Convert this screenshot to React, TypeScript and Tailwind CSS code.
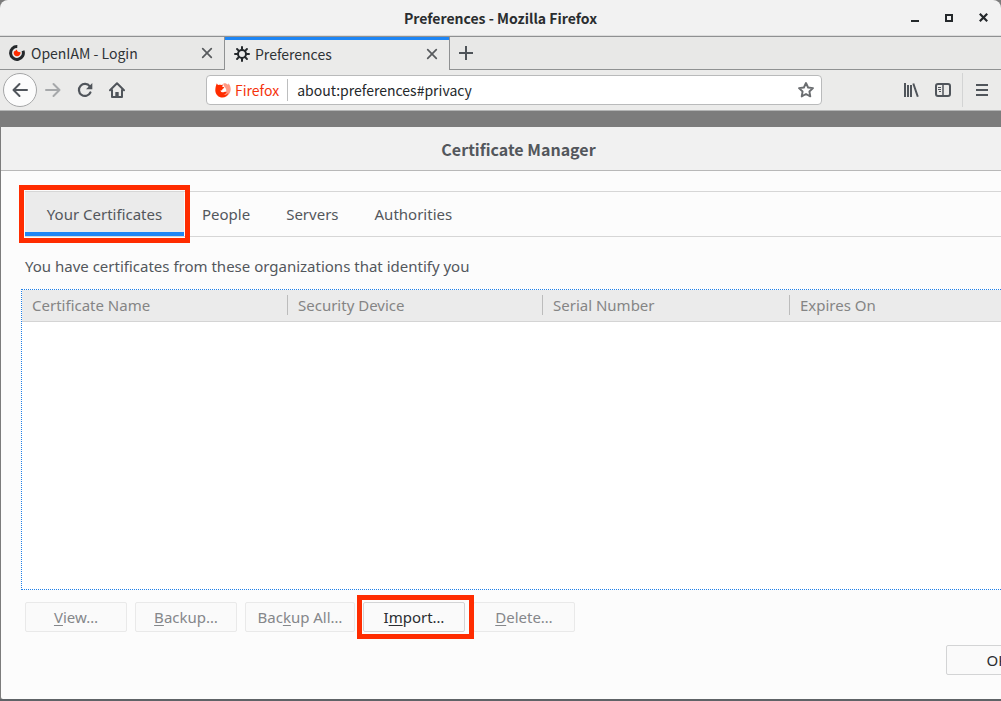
import { clsx } from 'clsx';
import type { ReactNode } from 'react';

const certTabs = ['Your Certificates', 'People', 'Servers', 'Authorities'];

const columns = [
  { label: 'Certificate Name', width: 'w-[265px]' },
  { label: 'Security Device', width: 'w-[255px]' },
  { label: 'Serial Number', width: 'w-[247px]' },
  { label: 'Expires On', width: '' },
];

function CloseIcon() {
  return (
    <svg width="12" height="12" viewBox="0 0 12 12" fill="none" stroke="#585b5e" strokeWidth="1.7" strokeLinecap="round">
      <path d="M1.7 1.7l8.600 8.600M10.300 1.700l-8.600 8.600" />
    </svg>
  )
}

function OpenIamIcon() {
  return (
    <svg width="16" height="16" viewBox="0 0 16 16" fill="none">
      <path d="M8.300 1.600A6.400 6.400 0 1 0 14 5.800" stroke="#24282b" strokeWidth="3" />
      <path d="M7.500 4.500l1.400 2.300 2.600.400c.300 2.200-1.300 4-3.500 4-2 0-3.300-1.400-3.300-3.200 0-1.200.6-2 1.800-2.300z" fill="#ff2c00" />
    </svg>
  )
}

function GearIcon() {
  return (
    <svg width="16" height="16" viewBox="0 0 16 16" fill="none" stroke="#24282b">
      <circle cx="8" cy="8" r="4" strokeWidth="2" />
      <path strokeWidth="2" strokeLinecap="round" d="M8 1v2.500M8 12.500V15M1 8h2.500M12.500 8H15M3.050 3.050l1.800 1.800M11.150 11.150l1.800 1.800M3.050 12.950l1.800-1.800M11.150 4.850l1.800-1.800" />
    </svg>
  )
}

function FirefoxIcon() {
  return (
    <svg width="16" height="16" viewBox="0 0 16 16">
      <path fill="#ff9a85" d="M8.500 1.200c2.200-.2 3.400.3 4.600 1.600l.4-1.500c1.500 1.800 2.300 4 2.200 6.400-.2 3.300-2.300 6-5.200 7L8 12.500c2.600-.8 3.600-2.500 3.200-4.700-.2-1.300-.9-2.200-1.500-2.900-.8-.9-1.500-2-1.200-3.700z" />
      <path fill="#ff2c00" d="M1.900 1.200c.3 1 .9 1.500 1.600 1.900 1-.5 1.900-.4 2.700-.1l2.200-.5c-.9.8-1.300 1.600-1.200 2.300l2.100.5c-.2.900-1 1.300-1.900 1.700l-.2 1.200-1.800.2c.5 1.700 2 2.400 3.900 1.700 1-.4 1.700-.4 2.300.2-.7 1.600-1.800 2.400-3.300 2.700 1.900.2 3.700-.5 5.200-2.300-.8 3-3.100 4.900-6 4.900C3.600 15.600.4 12.500.3 8.500c0-2.600.5-4.900 1.600-7.300z" />
    </svg>
  )
}

function Access({ text, at }: { text: string, at: number }) {
  return (
    <span>{text.slice(0, at)}<u className="underline-offset-2">{text[at]}</u>{text.slice(at + 1)}</span>
  )
}

function DialogButton({ children, disabled, wide }: {
  children: ReactNode
  disabled?: boolean
  wide?: boolean
}) {
  return (
    <button
      type="button"
      disabled={disabled}
      className={clsx(
        'h-[30px] shrink-0 rounded-xs border bg-[#fafafa]',
        wide ? 'w-[110px]' : 'w-[102px]',
        disabled ? 'border-[#e9e9e9] text-[#85878a]' : 'border-[#d3d4d5] text-[#2a2d31]'
      )}
    >
      {children}
    </button>
  )
}

function TitleBar() {
  return (
    <div className="flex h-9 items-center border-b border-[#dcdcdc] bg-[#f2f2f2] px-3">
      <div className="w-20" />
      <h1 className="grow text-center font-bold text-[#2a2d2f]">Preferences - Mozilla Firefox</h1>
      <div className="flex w-20 items-center justify-end">
        <button type="button" aria-label="Minimize" className="mr-[26px] mt-1.5 h-0.5 w-2 bg-[#24282b]" />
        <button type="button" aria-label="Maximize" className="mr-[26px] size-2 border-2 border-[#24282b]" />
        <button type="button" aria-label="Close window" className="mr-px">
          <svg width="9" height="9" viewBox="0 0 9 9" stroke="#24282b" strokeWidth="2.200"><path d="M.8.8l7.400 7.400M8.200.8L.8 8.200" /></svg>
        </button>
      </div>
    </div>
  )
}

function TabStrip() {
  return (
    <div className="flex h-[34px] items-stretch border-t border-[#8f9192] bg-[#e8e8e7] text-[#2f3336]">
      <div className="flex w-[225px] items-center border-b border-r border-[#8f9192] pl-[9px] pr-[11px]">
        <OpenIamIcon />
        <span className="ml-1.5 grow">OpenIAM - Login</span>
        <button type="button" aria-label="Close OpenIAM tab"><CloseIcon /></button>
      </div>
      <div className="relative flex w-[225px] items-center border-r border-[#8f9192] bg-[#ebebea] pl-[9px] pr-[11px]">
        <div className="absolute inset-x-0 top-0 h-[3px] bg-[#1e86f5]" />
        <GearIcon />
        <span className="ml-[5px] grow">Preferences</span>
        <button type="button" aria-label="Close Preferences tab"><CloseIcon /></button>
      </div>
      <div className="flex grow items-center border-b border-[#8f9192] pl-[9px]">
        <button type="button" aria-label="New tab">
          <svg width="14" height="14" viewBox="0 0 14 14" stroke="#4f5459" strokeWidth="2"><path d="M7 0v14M0 7h14" /></svg>
        </button>
      </div>
    </div>
  )
}

function NavBar() {
  return (
    <nav className="flex h-[41px] items-center border-b border-[#b4b5b5] bg-[#ebebea] pl-[3px]">
      <button type="button" aria-label="Back" className="flex size-[34px] shrink-0 items-center justify-center rounded-full border border-[#a5a6a7] bg-[#fcfcfc]">
        <svg width="16" height="16" viewBox="0 0 16 16" fill="none" stroke="#50555b" strokeWidth="2" strokeLinecap="round" strokeLinejoin="round"><path d="M15 8H1.500M7.500 2l-6 6 6 6" /></svg>
      </button>
      <button type="button" aria-label="Forward" className="ml-2 shrink-0" disabled>
        <svg width="16" height="16" viewBox="0 0 16 16" fill="none" stroke="#a6a8aa" strokeWidth="2" strokeLinecap="round" strokeLinejoin="round"><path d="M1 8h13.500M8.500 2l6 6-6 6" /></svg>
      </button>
      <button type="button" aria-label="Reload" className="ml-4 shrink-0">
        <svg width="16" height="16" viewBox="0 0 16 16" fill="none"><path d="M12.800 4.400A6 6 0 1 0 13.400 10.500" stroke="#50555b" strokeWidth="2.200" strokeLinecap="round" /><path d="M15.300 1v6.300H9z" fill="#50555b" /></svg>
      </button>
      <button type="button" aria-label="Home" className="ml-4 shrink-0">
        <svg width="16" height="16" viewBox="0 0 16 16" fill="none" stroke="#50555b" strokeWidth="2" strokeLinecap="round" strokeLinejoin="round"><path d="M1 8.200L8 1.300l7 6.900M3 8v7h10V8" /><path d="M6.300 15v-4.500a.5.500 0 0 1 .5-.5h2.400a.5.500 0 0 1 .5.500V15z" fill="#50555b" stroke="none" /></svg>
      </button>
      <div className="mx-[81px] flex h-[30px] grow items-center rounded-[4px] border border-[#b9babb] bg-white px-2">
        <FirefoxIcon />
        <span className="ml-1 text-[#f5330c]">Firefox</span>
        <div className="ml-2 h-[22px] w-px bg-[#bdbebf]" />
        <input aria-label="Address" defaultValue="about:preferences#privacy" className="ml-[9px] min-w-0 grow bg-transparent text-[#24282b] outline-none" />
        <button type="button" aria-label="Bookmark this page" className="-mr-1.5 shrink-0 px-1">
          <svg width="18" height="18" viewBox="0 0 18 18" fill="none" stroke="#6a6d70" strokeWidth="1.900" strokeLinejoin="round"><path d="M9 2l2.100 4.500 4.900.6-3.600 3.400.9 4.900L9 13l-4.300 2.400.9-4.900L2 7.100l4.900-.6z" /></svg>
        </button>
      </div>
      <button type="button" aria-label="Library" className="shrink-0">
        <svg width="16" height="16" viewBox="0 0 16 16" stroke="#50555b" strokeWidth="2"><path d="M2 1v14M5 3v12M8 3v12M10.300 1.500l4.500 13.200" /></svg>
      </button>
      <button type="button" aria-label="Sidebars" className="ml-4 shrink-0">
        <svg width="16" height="16" viewBox="0 0 16 16" fill="none" stroke="#50555b"><rect x="1" y="2" width="14" height="12" rx="2" strokeWidth="2" /><path strokeWidth="1.500" d="M8 2v12" /><path d="M3 5.500h3M3 7.500h3M4 9.500h2" /></svg>
      </button>
      <div className="ml-[11px] h-[34px] w-px bg-[#d3d4d4]" />
      <button type="button" aria-label="Open menu" className="ml-[13px] mr-[13px] shrink-0">
        <svg width="12" height="12" viewBox="0 0 12 12" stroke="#50555b" strokeWidth="2"><path d="M0 1h12M0 6h12M0 11h12" /></svg>
      </button>
    </nav>
  )
}

function CertTable() {
  return (
    <div className="mr-[21px] ml-5 mt-[11px] grow border border-dotted border-[#1e7fe8] bg-white">
      <table className="w-full table-fixed border-collapse text-left">
        <thead>
          <tr className="h-[31px] border-b border-[#d4d4d4] bg-[#ebebeb] text-[#858585]">
            {columns.map((col, i) => (
              <th key={col.label} className={clsx('p-0 font-normal', col.width)}>
                <div className={clsx('h-5 border-l leading-5', i === 0 ? 'border-transparent pl-[9px]' : 'border-[#bcbcbc] pl-[10px]')}>{col.label}</div>
              </th>
            ))}
          </tr>
        </thead>
      </table>
    </div>
  )
}

function CertificateManager() {
  return (
    <section aria-labelledby="cert-title" className="-mr-[71px] ml-px flex grow flex-col rounded-xs bg-[#fcfcfc] text-[15px]">
      <header className="flex h-11 items-center justify-center border-b border-[#b8b8b8] bg-[#f1f1f1] pr-9">
        <h2 id="cert-title" className="font-['Noto_Sans_CJK_SC',sans-serif] text-base font-bold text-[#53575c]">Certificate Manager</h2>
      </header>
      <div role="tablist" className="mx-6 mt-5 flex h-[46px] border-y border-[#d6d6d6] text-[#53575c]">
        {certTabs.map((tab, i) => (
          <button
            key={tab}
            type="button"
            role="tab"
            aria-selected={i === 0}
            className={clsx('relative', i === 0 ? 'w-[159px] bg-[#ebebeb]' : 'px-[18px]')}
          >
            {tab}
            {i === 0 && <span className="absolute inset-x-0 bottom-0 h-1 bg-[#1e86f5]" />}
            {/* Callout round the tab */}
            {i === 0 && <span className="absolute -inset-x-1.5 -inset-y-[7px] border-5 border-[#ff2c00]" />}
          </button>
        ))}
      </div>
      <p className="mx-6 mt-[17px] leading-6 text-[#53575c]">You have certificates from these organizations that identify you</p>
      <CertTable />
      <div className="mx-6 mt-3 flex gap-2">
        <DialogButton disabled><Access text="View…" at={0} /></DialogButton>
        <DialogButton disabled><Access text="Backup…" at={0} /></DialogButton>
        <DialogButton disabled wide><Access text="Backup All…" at={3} /></DialogButton>
        <div className="relative">
          <DialogButton><Access text="Import…" at={1} /></DialogButton>
          {/* Callout round the button */}
          <span className="pointer-events-none absolute -inset-y-[7px] -left-1.5 -right-[9px] border-5 border-[#ff2c00]" />
        </div>
        <DialogButton disabled><Access text="Delete…" at={0} /></DialogButton>
      </div>
      <div className="mx-6 mb-6 mt-[13px] flex justify-end">
        <DialogButton>OK</DialogButton>
      </div>
    </section>
  )
}

export default function App() {
  return (
    <div className="flex min-h-screen flex-col overflow-hidden bg-[#7c7c7c] font-['Noto_Sans','Liberation_Sans',sans-serif]">
      <div className="overflow-hidden rounded-t-lg font-['Noto_Sans_CJK_SC',sans-serif] text-sm">
        <TitleBar />
        <TabStrip />
        <NavBar />
      </div>
      <main className="flex grow flex-col border-b-2 border-[#5f6367] pt-4">
        <CertificateManager />
      </main>
    </div>
  )
}
